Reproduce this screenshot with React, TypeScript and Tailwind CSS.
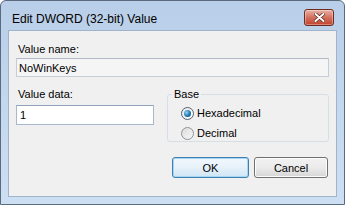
export default function App() {
  const font = { fontFamily: '"Liberation Sans", Arial, sans-serif' }
  return (
    <div className="w-[345px] h-[205px] bg-white" style={font}>
      <div className="flex h-full w-full flex-col rounded-t-[6px] border border-[#5b6b7e] bg-gradient-to-b from-[#b9cee8] via-[#c3d7ee] to-[#cddff3]">
        {/* title bar */}
        <div className="flex h-[29px] shrink-0 items-start justify-between pl-[11px] pr-[10px]">
          <span className="pt-[11px] text-[12px] leading-[14px] text-black">Edit DWORD (32-bit) Value</span>
          <button className="mt-[8px] flex h-[17px] w-[30px] items-center justify-center rounded-[3px] border border-[#6e2b22] bg-gradient-to-b from-[#e8b1a6] via-[#d2705e] to-[#c1412b] shadow-[inset_0_0_0_1px_rgba(255,255,255,0.35)]">
            <svg width="11" height="9" viewBox="0 0 11 9">
              <path d="M1.5 1 L9.5 8 M9.5 1 L1.5 8" stroke="#5a2119" strokeWidth="3.4" strokeLinecap="round" />
              <path d="M1.5 1 L9.5 8 M9.5 1 L1.5 8" stroke="#ffffff" strokeWidth="2" strokeLinecap="round" />
            </svg>
          </button>
        </div>

        {/* client */}
        <div className="mx-[7px] mb-[7px] flex flex-1 flex-col border border-[#9fb3cb] bg-[#f0f0f0] px-[7px] pt-[11px] text-[11px] leading-[14px] text-black">
          <label className="pl-[2px]">Value name:</label>
          <div className="mt-[2px] flex h-[19px] items-center border border-[#c5ced8] border-t-[#b1bac6] bg-[#f5f5f5] px-[2px] text-black">
            NoWinKeys
          </div>

          <div className="mt-[10px] flex gap-[13px]">
            <div className="flex w-[138px] flex-col">
              <label className="pl-[2px]">Value data:</label>
              <div className="mt-[4px] flex h-[20px] items-center border border-[#a9b9cc] border-t-[#8fa3bb] bg-white px-[3px]">1</div>
            </div>
            <fieldset className="h-[55px] flex-1 rounded-[3px] border border-[#d5dfe5] pl-[13px]">
              <legend className="ml-[-9px] px-[2px]">Base</legend>
              <div className="mt-[5px] flex items-center gap-[3px]">
                <span className="flex h-[13px] w-[13px] items-center justify-center rounded-full border border-[#55616f] bg-gradient-to-br from-[#e6e8eb] to-[#ffffff]">
                  <span className="h-[7px] w-[7px] rounded-full bg-[radial-gradient(circle_at_35%_35%,#8fd3f7,#1a6fa8_60%,#0d4c7e)]" />
                </span>
                <span>Hexadecimal</span>
              </div>
              <div className="mt-[6px] flex items-center gap-[3px]">
                <span className="h-[13px] w-[13px] rounded-full border border-[#8e9297] bg-gradient-to-br from-[#dcdcdc] to-[#f8f8f8]" />
                <span>Decimal</span>
              </div>
            </fieldset>
          </div>

          <div className="mt-[15px] flex justify-end gap-[5px] pr-[1px]">
            <button className="flex h-[21px] w-[77px] items-center justify-center rounded-[3px] border border-[#3c7fb1] bg-gradient-to-b from-[#f1f8fc] via-[#e6f1f9] to-[#cfe6f5] shadow-[inset_0_0_0_1px_#a6d6f2]">
              OK
            </button>
            <button className="flex h-[21px] w-[74px] items-center justify-center rounded-[3px] border border-[#707070] bg-gradient-to-b from-[#f2f2f2] via-[#ebebeb] to-[#d6d6d6] shadow-[inset_0_0_0_1px_#fcfcfc]">
              Cancel
            </button>
          </div>
        </div>
      </div>
    </div>
  )
}
